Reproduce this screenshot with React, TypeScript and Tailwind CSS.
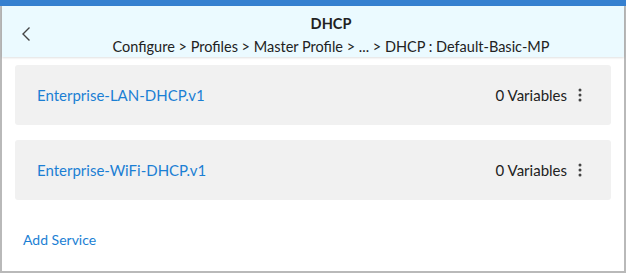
import React from 'react';

const services = [
  { name: 'Enterprise-LAN-DHCP.v1', variables: 0 },
  { name: 'Enterprise-WiFi-DHCP.v1', variables: 0 },
];

const KebabIcon = () => (
  <svg width="4" height="14" viewBox="0 0 4 14" className="fill-[#444]">
    <circle cx="2" cy="2" r="1.5" />
    <circle cx="2" cy="7" r="1.5" />
    <circle cx="2" cy="12" r="1.5" />
  </svg>
);

export default function App() {
  return (
    <div className="w-[626px] h-[273px] flex flex-col bg-white font-['Lato',sans-serif] overflow-hidden">
      <div className="h-[6px] bg-[#3580d0] shrink-0" />
      <div className="flex-1 flex flex-col border-x-2 border-b-2 border-[#b9b9b9]">
        <div className="h-[51px] shrink-0 bg-[#ebfaff] flex items-center relative shadow-[0_1px_2px_rgba(0,0,0,0.12)]">
          <button className="absolute left-[15px] top-[16px] p-1 text-[#444]">
            <svg width="10" height="16" viewBox="0 0 10 16" fill="none" stroke="currentColor" strokeWidth="1.4">
              <path d="M8.5 1.5 L2 8 L8.5 14.5" />
            </svg>
          </button>
          <div className="flex-1 flex flex-col items-center pt-[7px] pl-[36px]">
            <div className="text-[14.5px] font-bold text-[#222] leading-[20px]">DHCP</div>
            <div className="text-[14.5px] text-[#222] leading-[20px] mt-[3px]">
              Configure &gt; Profiles &gt; Master Profile &gt; ... &gt; DHCP : Default-Basic-MP
            </div>
          </div>
        </div>
        <div className="px-[13px] pt-[8px] flex flex-col gap-[15px]">
          {services.map((s) => (
            <div
              key={s.name}
              className="h-[60px] rounded-[3px] bg-[#f1f1f1] flex items-center justify-between pl-[22px] pr-[29px]"
            >
              <a className="text-[15px] text-[#1b7fd4] cursor-pointer">{s.name}</a>
              <div className="flex items-center gap-[11px] text-[15px] text-[#222]">
                <span>{s.variables} Variables</span>
                <KebabIcon />
              </div>
            </div>
          ))}
        </div>
        <div className="pl-[21px] pt-[27px]">
          <a className="text-[14px] text-[#1b7fd4] cursor-pointer">Add Service</a>
        </div>
      </div>
    </div>
  );
}
